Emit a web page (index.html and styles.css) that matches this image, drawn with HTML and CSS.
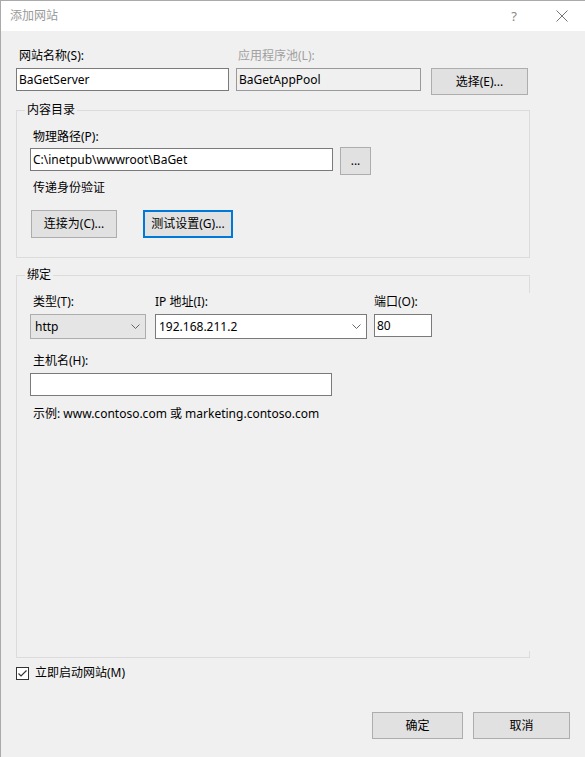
FILE: index.html
```html
<!DOCTYPE html>
<html>
<head>
    <meta charset="UTF-8">
    <title>添加网站</title>
    <link rel="stylesheet" href="styles.css">
</head>
<body>
    <div class="window">
        <div class="titlebar">
            <span class="title">添加网站</span>
            <span class="help">?</span>
            <svg class="close" width="12" height="12" viewBox="0 0 12 12">
                <path d="M0.5 0.5L11.5 11.5M11.5 0.5L0.5 11.5" stroke="#777" stroke-width="1" fill="none"/>
            </svg>
        </div>

        <div class="content">
            <div class="site-row">
                <div class="field site-name">
                    <label>网站名称(S):</label>
                    <input class="text" type="text" value="BaGetServer">
                </div>
                <div class="field app-pool">
                    <label class="disabled">应用程序池(L):</label>
                    <input class="text readonly" type="text" value="BaGetAppPool" readonly>
                </div>
                <button class="btn btn-select">选择(E)...</button>
            </div>

            <div class="group group-dir">
                <span class="group-title">内容目录</span>
                <label class="lbl-path">物理路径(P):</label>
                <div class="path-row">
                    <input class="text path" type="text" value="C:\inetpub\wwwroot\BaGet">
                    <button class="btn btn-browse">...</button>
                </div>
                <div class="pass-auth">传递身份验证</div>
                <div class="auth-row">
                    <button class="btn btn-connect">连接为(C)...</button>
                    <button class="btn btn-test focus">测试设置(G)...</button>
                </div>
            </div>

            <div class="group group-bind">
                <span class="group-title">绑定</span>
                <div class="bind-row">
                    <div class="field">
                        <label>类型(T):</label>
                        <div class="combo combo-type">
                            <span>http</span>
                            <svg width="9" height="5" viewBox="0 0 9 5"><path d="M0.5 0.5L4.5 4.5L8.5 0.5" stroke="#666" fill="none"/></svg>
                        </div>
                    </div>
                    <div class="field">
                        <label>IP 地址(I):</label>
                        <div class="combo combo-ip">
                            <span>192.168.211.2</span>
                            <svg width="9" height="5" viewBox="0 0 9 5"><path d="M0.5 0.5L4.5 4.5L8.5 0.5" stroke="#666" fill="none"/></svg>
                        </div>
                    </div>
                    <div class="field">
                        <label>端口(O):</label>
                        <input class="text port" type="text" value="80">
                    </div>
                </div>
                <label class="lbl-host">主机名(H):</label>
                <input class="text host" type="text" value="">
                <div class="example">示例: www.contoso.com 或 marketing.contoso.com</div>
            </div>

            <label class="autostart">
                <span class="check">
                    <svg width="11" height="11" viewBox="0 0 11 11"><path d="M1.5 5.5L4 8L9.5 2.5" stroke="#333" stroke-width="1.2" fill="none"/></svg>
                </span>
                立即启动网站(M)
            </label>

            <div class="actions">
                <button class="btn btn-ok">确定</button>
                <button class="btn btn-cancel">取消</button>
            </div>
        </div>
    </div>
</body>
</html>
```

FILE: styles.css
```css
*{margin: 0;padding: 0;box-sizing: border-box;}
body{
    width: 585px;
    height: 757px;
    overflow: hidden;
    background-color: #f0f0f0;
    font-family: "Noto Sans", "Noto Sans CJK SC", sans-serif;
    font-size: 12px;
    line-height: 16px;
    color: #000;
}
.window{
    height: 757px;
    border-left: 1px solid #aaa;
}

/* title bar */
.titlebar{
    height: 31px;
    background-color: #fff;
    border-top: 1px solid #aaa;
    display: flex;
    align-items: center;
    padding-left: 9px;
}
.title{
    color: #999;
    flex: 1;
}
.help{
    color: #888;
    font-size: 13px;
    margin-right: 39px;
}
.close{
    margin-right: 17px;
}

.content{
    padding-left: 15px;
}
label{
    display: block;
}
.disabled{
    color: #a0a0a0;
}

/* controls */
.text{
    display: block;
    height: 23px;
    border: 1px solid #7a7a7a;
    background-color: #fff;
    padding: 0 2px;
    font: inherit;
    color: #000;
    outline: none;
}
.text.readonly{
    background-color: #f0f0f0;
    border-color: #999;
}
.btn{
    display: block;
    height: 28px;
    border: 1px solid #adadad;
    background-color: #e1e1e1;
    font: inherit;
    color: #000;
}
.btn.focus{
    border: 2px solid #0078d7;
}

/* site name row */
.site-row{
    display: flex;
    align-items: flex-start;
    margin-top: 17px;
}
.field label{
    padding-left: 3px;
    margin-bottom: 4px;
}
.site-name .text{
    width: 213px;
}
.app-pool{
    margin-left: 7px;
}
.app-pool label{
    padding-left: 2px;
}
.app-pool .text{
    width: 185px;
}
.btn-select{
    width: 97px;
    height: 27px;
    margin: 20px 0 0 10px;
}

/* group boxes */
.group{
    width: 514px;
    border: 1px solid #dcdcdc;
    padding-left: 13px;
}
.group-title{
    display: block;
    width: fit-content;
    margin: -9px 0 0 -5px;
    padding: 0 2px;
    background-color: #f0f0f0;
}
.group-dir{
    margin-top: 15px;
    padding-bottom: 19px;
}
.lbl-path{
    margin-top: 11px;
    padding-left: 3px;
}
.path-row{
    display: flex;
    align-items: flex-start;
    margin-top: 3px;
}
.path{
    width: 303px;
}
.btn-browse{
    width: 31px;
    margin: -1px 0 0 7px;
    line-height: 10px;
}
.pass-auth{
    margin-top: 5px;
    padding-left: 3px;
}
.auth-row{
    display: flex;
    margin-top: 14px;
}
.btn-connect{
    width: 86px;
    margin-left: 1px;
}
.btn-test{
    width: 90px;
    margin-left: 26px;
}

/* binding group: the right edge only shows near the corners */
.group-bind{
    position: relative;
    height: 383px;
    margin-top: 17px;
    border-right: none;
}
.group-bind::before,
.group-bind::after{
    content: "";
    position: absolute;
    right: 0;
    width: 1px;
    background-color: #dcdcdc;
}
.group-bind::before{
    top: -1px;
    height: 18px;
}
.group-bind::after{
    bottom: 0;
    height: 6px;
}
.bind-row{
    display: flex;
    margin-top: 11px;
}
.bind-row .field + .field{
    margin-left: 9px;
}
.bind-row .field:last-child{
    margin-left: 7px;
}
.bind-row .field:nth-child(2) label{
    padding-left: 0;
}
.bind-row .field:last-child label{
    padding-left: 0;
}
.combo{
    display: flex;
    align-items: center;
    justify-content: space-between;
    height: 25px;
    padding: 0 5px 0 4px;
    border: 1px solid #7a7a7a;
    background-color: #fff;
}
.combo-type{
    width: 116px;
    border-color: #adadad;
    background-color: #e5e5e5;
}
.combo-ip{
    width: 212px;
    padding-left: 3px;
}
.port{
    width: 58px;
}
.lbl-host{
    margin-top: 14px;
    padding-left: 3px;
}
.host{
    width: 302px;
    margin-top: 4px;
}
.example{
    margin-top: 10px;
    padding-left: 3px;
}

/* bottom */
.autostart{
    display: flex;
    align-items: center;
    margin-top: 8px;
    height: 14px;
}
.check{
    display: flex;
    align-items: center;
    justify-content: center;
    width: 13px;
    height: 13px;
    border: 1px solid #333;
    background-color: #fff;
    margin-right: 6px;
}
.actions{
    display: flex;
    justify-content: flex-end;
    margin-top: 32px;
    padding-right: 15px;
}
.actions .btn{
    height: 27px;
}
.btn-ok{
    width: 91px;
}
.btn-cancel{
    width: 97px;
    margin-left: 10px;
}
```
